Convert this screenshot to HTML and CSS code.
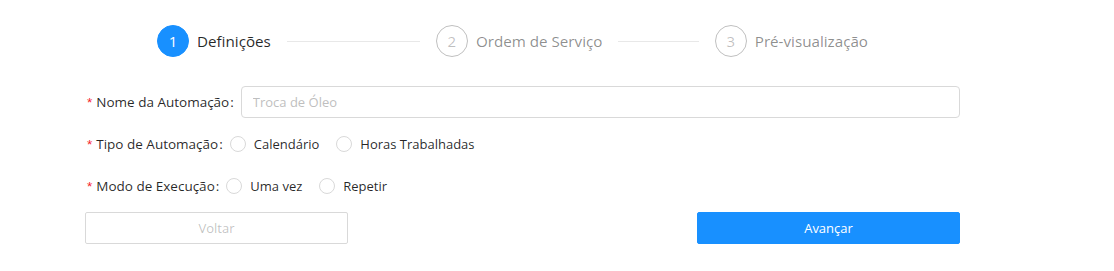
FILE: index.html
```html
<!doctype html>
<html lang="pt">
	<head>
		<meta charset="UTF-8" />
		<title>Nova Automação</title>
		<link rel="stylesheet" href="styles.css">
	</head>
	<body>
		<section class="wrap">
			<div class="steps">
				<div class="step active">
					<span class="step-icon">1</span>
					<span class="step-title">Definições</span>
				</div>
				<div class="step">
					<span class="step-icon">2</span>
					<span class="step-title">Ordem de Serviço</span>
				</div>
				<div class="step last">
					<span class="step-icon">3</span>
					<span class="step-title">Pré-visualização</span>
				</div>
			</div>

			<form class="form">
				<div class="row">
					<label class="label"><i>*</i>Nome da Automação<b>:</b></label>
					<input class="input" type="text" placeholder="Troca de Óleo" />
				</div>
				<div class="row">
					<label class="label"><i>*</i>Tipo de Automação<b>:</b></label>
					<label class="radio"><span class="dot"></span>Calendário</label>
					<label class="radio"><span class="dot"></span>Horas Trabalhadas</label>
				</div>
				<div class="row">
					<label class="label"><i>*</i>Modo de Execução<b>:</b></label>
					<label class="radio"><span class="dot"></span>Uma vez</label>
					<label class="radio"><span class="dot"></span>Repetir</label>
				</div>
				<div class="actions">
					<button type="button" class="btn" disabled>Voltar</button>
					<button type="button" class="btn primary">Avançar</button>
				</div>
			</form>
		</section>
	</body>
</html>
```

FILE: styles.css
```css
*{
	margin: 0;
	padding: 0;
	box-sizing: border-box;
}
body{
	background: #fff;
	font-family: "Open Sans", "Noto Sans", sans-serif;
	font-size: 13px;
	color: rgba(0,0,0,.85);
}
.wrap{
	width: 875px;
	margin-left: 85px;
	padding-top: 25px;
}

/* steps */
.steps{
	display: flex;
	width: 711px;
	margin-left: 72px;
}
.step{
	flex: 1;
	display: flex;
	align-items: center;
	padding-left: 16px;
	overflow: hidden;
	white-space: nowrap;
}
.step:first-child{
	padding-left: 0;
}
.step.last{
	flex: none;
}
.step-icon{
	flex: none;
	width: 32px;
	height: 32px;
	border-radius: 50%;
	border: 1px solid rgba(0,0,0,.25);
	color: rgba(0,0,0,.25);
	font-size: 15px;
	line-height: 30px;
	text-align: center;
	margin-right: 8px;
}
.step-title{
	position: relative;
	font-size: 15.2px;
	color: rgba(0,0,0,.45);
	padding-right: 16px;
}
.step-title:after{
	content: "";
	position: absolute;
	left: 100%;
	top: 50%;
	width: 9999px;
	height: 1px;
	background: #e8e8e8;
}
.step.last .step-title{
	padding-right: 0;
}
.step.last .step-title:after{
	display: none;
}
.step.active .step-icon{
	background: #1890ff;
	border-color: #1890ff;
	color: #fff;
}
.step.active .step-title{
	color: rgba(0,0,0,.85);
}

/* form */
.form{
	margin-top: 29px;
}
.row{
	display: flex;
	align-items: center;
	height: 32px;
	margin-bottom: 10px;
}
.label{
	padding-left: 2px;
	font-size: 13.5px;
	white-space: nowrap;
}
.label i{
	font-style: normal;
	color: #f5222d;
	margin-right: 4px;
	font-family: SimSun, sans-serif;
}
.label b{
	font-weight: normal;
	margin: 0 7px 0 1px;
}
.input{
	flex: 1;
	height: 32px;
	border: 1px solid #d9d9d9;
	border-radius: 4px;
	padding: 0 11px;
	font-family: inherit;
	font-size: 13px;
	color: rgba(0,0,0,.65);
	outline: none;
}
.input::placeholder{
	color: #bfbfbf;
}
.radio{
	display: flex;
	align-items: center;
	margin-right: 17px;
	white-space: nowrap;
}
.dot{
	width: 16px;
	height: 16px;
	border: 1px solid #d9d9d9;
	border-radius: 50%;
	margin-right: 8px;
}

.actions{
	display: flex;
	justify-content: space-between;
}
.btn{
	width: 263px;
	height: 32px;
	border: 1px solid #d9d9d9;
	border-radius: 2px;
	background: #fff;
	font-family: inherit;
	font-size: 13px;
	color: rgba(0,0,0,.65);
}
.btn[disabled]{
	color: rgba(0,0,0,.25);
}
.btn.primary{
	background: #1890ff;
	border-color: #1890ff;
	color: #fff;
}
```
